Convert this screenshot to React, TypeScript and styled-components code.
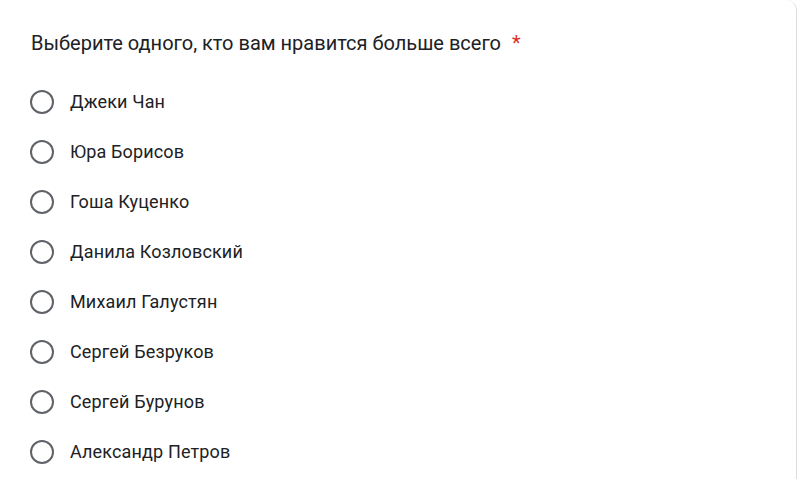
import styled, {createGlobalStyle} from "styled-components";

const GlobalStyle = createGlobalStyle`
  html, body {
    margin: 0;
    padding: 0;
    background: #ffffff;
  }

  body {
    font-family: Roboto, "Noto Sans", Arial, sans-serif;
    color: #202124;
  }
`

const Card = styled.div`
  width: 797px;
  height: 479px;
  box-sizing: border-box;
  background: #ffffff;
  border-right: 1px solid #dadce0;
  border-top-right-radius: 10px;
  padding: 31px 0 0 30px;
  display: flex;
  flex-direction: column;
`

const Question = styled.div`
  font-size: 20px;
  line-height: 24px;
  letter-spacing: 0;
  padding-left: 1px;
  margin-bottom: 22px;
  display: flex;
  gap: 11px;
`

const Required = styled.span`
  color: #d93025;
`

const Options = styled.div`
  display: flex;
  flex-direction: column;
`

const Option = styled.label`
  height: 50px;
  display: flex;
  align-items: center;
  gap: 16px;
  cursor: pointer;
`

const Radio = styled.span`
  width: 24px;
  height: 24px;
  box-sizing: border-box;
  border: 2.4px solid #5f6368;
  border-radius: 50%;
  flex-shrink: 0;
`

const Label = styled.span`
  font-size: 18px;
  line-height: 22px;
  letter-spacing: 0.15px;
  color: #202124;
`

const names = [
    "Джеки Чан",
    "Юра Борисов",
    "Гоша Куценко",
    "Данила Козловский",
    "Михаил Галустян",
    "Сергей Безруков",
    "Сергей Бурунов",
    "Александр Петров",
];

export default function App() {
    return (
        <>
            <GlobalStyle/>
            <Card>
                <Question>
                    <span>Выберите одного, кто вам нравится больше всего</span>
                    <Required>*</Required>
                </Question>
                <Options>
                    {names.map(name => (
                        <Option key={name}>
                            <Radio/>
                            <Label>{name}</Label>
                        </Option>
                    ))}
                </Options>
            </Card>
        </>
    )
}
